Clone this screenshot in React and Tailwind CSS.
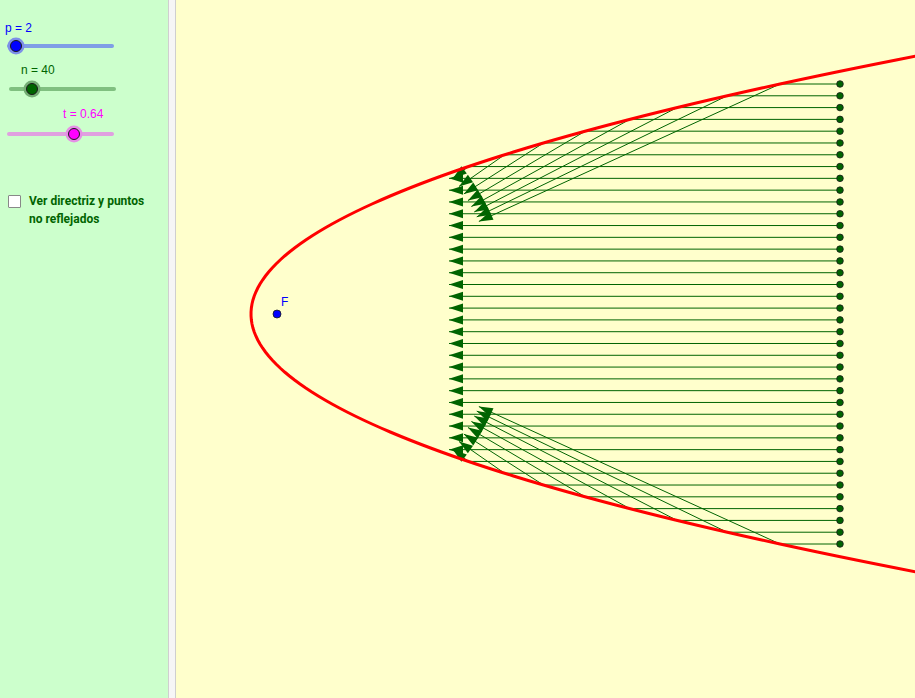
import React from 'react';

// parabola geometry (page coordinates)
const VX = 251;
const VY = 314;
const F = 25;
const FX = VX + F;
const X0 = 840;
const DIST = 391;
const N = 40;
const HALF = 230;

const parabolaPath = () => {
  const pts = [];
  for (let y = -20; y <= 720; y += 4) {
    const d = y - VY;
    pts.push(`${(VX + (d * d) / (4 * F)).toFixed(2)},${y}`);
  }
  return 'M' + pts.join(' L');
};

const rays = () => {
  const out = [];
  for (let k = 0; k < N; k++) {
    const dy = -HALF + (k * 2 * HALF) / (N - 1);
    const y = VY + dy;
    const xp = VX + (dy * dy) / (4 * F);
    if (X0 - xp >= DIST) {
      out.push({ y, pts: [[X0, y], [X0 - DIST, y]], dir: [-1, 0] });
    } else {
      const s = DIST - (X0 - xp);
      const ex = FX - xp;
      const ey = VY - y;
      const len = Math.hypot(ex, ey);
      const ux = ex / len;
      const uy = ey / len;
      out.push({
        y,
        pts: [[X0, y], [xp, y], [xp + s * ux, y + s * uy]],
        dir: [ux, uy],
      });
    }
  }
  return out;
};

function Arrow({ tip, dir }) {
  const [tx, ty] = tip;
  const [ux, uy] = dir;
  const L = 14;
  const W = 4.5;
  const bx = tx - ux * L;
  const by = ty - uy * L;
  const px = -uy;
  const py = ux;
  return (
    <polygon
      points={`${tx},${ty} ${bx + px * W},${by + py * W} ${bx - px * W},${by - py * W}`}
      fill="#006400"
    />
  );
}

function Slider({ knob, track, fill, halo, start = 8, end = 113 }) {
  return (
    <svg width="130" height="20" className="block">
      <line x1={start} y1="10" x2={end} y2="10" stroke={track} strokeWidth="4" strokeLinecap="round" />
      <circle cx={knob} cy="10" r="8.5" fill={halo} />
      <circle cx={knob} cy="10" r="5.5" fill={fill} stroke="#1a1a1a" strokeWidth="1" />
    </svg>
  );
}

export default function App() {
  const list = rays();
  return (
    <div className="flex w-[915px] h-[698px] overflow-hidden" style={{ fontFamily: '"Liberation Sans", Arial, sans-serif' }}>
      {/* Controls */}
      <aside className="w-[168px] shrink-0 bg-[#ccffcc] pt-[21px]">
        <div className="h-[14px] leading-[14px] text-[12px] pl-[5px] text-[#0000ff]">p = 2</div>
        <div className="mt-[1px]">
          <Slider knob={16} track="#7f9ee6" fill="#0000ff" halo="#7d8fe8" start={9} end={112} />
        </div>

        <div className="mt-[7px] h-[14px] leading-[14px] text-[12px] pl-[21px] text-[#006400]">n = 40</div>
        <div className="mt-[2px]">
          <Slider knob={32} track="#80c080" fill="#006400" halo="#74ad74" start={11} end={114} />
        </div>

        <div className="mt-[8px] h-[14px] leading-[14px] text-[12px] pl-[63px] text-[#ff00ff]">t = 0.64</div>
        <div className="mt-[3px]">
          <Slider knob={74} track="#e0a0e0" fill="#ff00ff" halo="#e590e5" start={9} end={112} />
        </div>

        <div className="mt-[48px] flex items-start pl-[8px]">
          <div className="mt-[3px] w-[13px] h-[13px] bg-white border border-[#888888] rounded-[1px] shrink-0" />
          <p
            className="ml-[8px] text-[12px] leading-[18px] font-bold text-[#006400]"
            style={{ fontFamily: 'Roboto, "Liberation Sans", sans-serif' }}
          >
            Ver directriz y puntos
            <br />
            no reflejados
          </p>
        </div>
      </aside>

      {/* Splitter */}
      <div className="w-[8px] shrink-0 bg-[#f6f6f6] border-x border-[#cfcfcf]" />

      {/* Graphics view */}
      <div className="flex-1 bg-[#ffffcc]">
        <svg width="739" height="698" viewBox="176 0 739 698" className="block">
          {list.map((r, i) => (
            <polyline
              key={i}
              points={r.pts.map((p) => p.join(',')).join(' ')}
              fill="none"
              stroke="#006400"
              strokeWidth="1"
            />
          ))}
          {list.map((r, i) => (
            <Arrow key={'a' + i} tip={r.pts[r.pts.length - 1]} dir={r.dir} />
          ))}
          {list.map((r, i) => (
            <circle key={'c' + i} cx={X0} cy={r.y} r="3.3" fill="#006400" stroke="#1a1a1a" strokeWidth="0.8" />
          ))}
          <path d={parabolaPath()} fill="none" stroke="#ff0000" strokeWidth="3" />
          <circle cx={FX + 1} cy={VY} r="4" fill="#0000ff" stroke="#1a1a1a" strokeWidth="0.8" />
          <text x={281} y={306} fontSize="12" fill="#0000ff" fontFamily='"Liberation Sans", Arial, sans-serif'>
            F
          </text>
        </svg>
      </div>
    </div>
  );
}
